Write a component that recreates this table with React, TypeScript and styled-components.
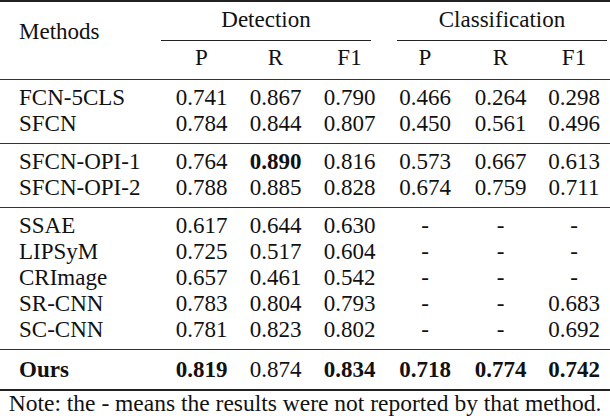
import styled, { createGlobalStyle } from "styled-components";

const GlobalStyle = createGlobalStyle`
    html, body {
        margin: 0;
        padding: 0;
        background: #fff;
    }
    body {
        font-family: "Liberation Serif", "Times New Roman", serif;
        color: #111;
    }
`;

const COLUMNS = "164px 75px 73px 75px 76px 75px 72px";

const Page = styled.div`
    width: 610px;
    height: 416px;
    overflow: hidden;
    font-size: 23px;
`;

const Table = styled.div`
    width: 610px;
    border-top: 2px solid #222;
    border-bottom: 2px solid #222;
`;

const Header = styled.div`
    display: grid;
    grid-template-columns: ${COLUMNS};
    grid-template-rows: auto auto;
    padding: 5px 0 8px;
    border-bottom: 1px solid #333;
`;

const MethodsLabel = styled.div`
    grid-row: 1 / 3;
    grid-column: 1;
    padding: 12px 0 0 19px;
    line-height: 26px;
`;

const GroupLabel = styled.div<{ $start: number; $left: number; $right: number }>`
    grid-row: 1;
    grid-column: ${(p) => `${p.$start} / span 3`};
    margin: 0 ${(p) => p.$right}px 0 ${(p) => p.$left}px;
    padding-bottom: 7px;
    border-bottom: 1px solid #222;
    text-align: center;
    line-height: 26px;
`;

const SubLabel = styled.div<{ $col: number }>`
    grid-row: 2;
    grid-column: ${(p) => p.$col};
    text-align: center;
    line-height: 26px;
    padding-top: 4px;
`;

const Group = styled.div<{ $last?: boolean }>`
    padding: ${(p) => (p.$last ? "7px 0 6px" : "5px 0 6px")};
    border-bottom: ${(p) => (p.$last ? "none" : "1px solid #333")};
`;

const Row = styled.div<{ $bold?: boolean }>`
    display: grid;
    grid-template-columns: ${COLUMNS};
    line-height: 26px;
    font-weight: ${(p) => (p.$bold ? 700 : 400)};
`;

const MethodCell = styled.div`
    padding-left: 19px;
    white-space: nowrap;
`;

const ValueCell = styled.div<{ $weight?: number }>`
    text-align: center;
    font-weight: ${(p) => p.$weight ?? "inherit"};
`;

const Note = styled.div`
    text-align: center;
    font-size: 23.5px;
    line-height: 24px;
    white-space: nowrap;
`;

type Value = string | { v: string; weight: number };

type Entry = { name: string; values: Value[]; bold?: boolean };

const groups: Entry[][] = [
    [
        { name: "FCN-5CLS", values: ["0.741", "0.867", "0.790", "0.466", "0.264", "0.298"] },
        { name: "SFCN", values: ["0.784", "0.844", "0.807", "0.450", "0.561", "0.496"] },
    ],
    [
        { name: "SFCN-OPI-1", values: ["0.764", { v: "0.890", weight: 700 }, "0.816", "0.573", "0.667", "0.613"] },
        { name: "SFCN-OPI-2", values: ["0.788", "0.885", "0.828", "0.674", "0.759", "0.711"] },
    ],
    [
        { name: "SSAE", values: ["0.617", "0.644", "0.630", "-", "-", "-"] },
        { name: "LIPSyM", values: ["0.725", "0.517", "0.604", "-", "-", "-"] },
        { name: "CRImage", values: ["0.657", "0.461", "0.542", "-", "-", "-"] },
        { name: "SR-CNN", values: ["0.783", "0.804", "0.793", "-", "-", "0.683"] },
        { name: "SC-CNN", values: ["0.781", "0.823", "0.802", "-", "-", "0.692"] },
    ],
    [
        {
            name: "Ours",
            bold: true,
            values: ["0.819", { v: "0.874", weight: 400 }, "0.834", "0.718", "0.774", "0.742"],
        },
    ],
];

const renderValue = (value: Value, i: number) =>
    typeof value === "string" ? (
        <ValueCell key={i}>{value}</ValueCell>
    ) : (
        <ValueCell key={i} $weight={value.weight}>
            {value.v}
        </ValueCell>
    );

const App = () => {
    return (
        <Page>
            <GlobalStyle />
            <Table>
                <Header>
                    <MethodsLabel>Methods</MethodsLabel>
                    <GroupLabel $start={2} $left={-3} $right={16}>
                        Detection
                    </GroupLabel>
                    <GroupLabel $start={5} $left={10} $right={3}>
                        Classification
                    </GroupLabel>
                    {["P", "R", "F1", "P", "R", "F1"].map((label, i) => (
                        <SubLabel key={i} $col={i + 2}>
                            {label}
                        </SubLabel>
                    ))}
                </Header>
                {groups.map((rows, g) => (
                    <Group key={g} $last={g === groups.length - 1}>
                        {rows.map((row) => (
                            <Row key={row.name} $bold={row.bold}>
                                <MethodCell>{row.name}</MethodCell>
                                {row.values.map(renderValue)}
                            </Row>
                        ))}
                    </Group>
                ))}
            </Table>
            <Note>Note: the - means the results were not reported by that method.</Note>
        </Page>
    );
};

export default App;
